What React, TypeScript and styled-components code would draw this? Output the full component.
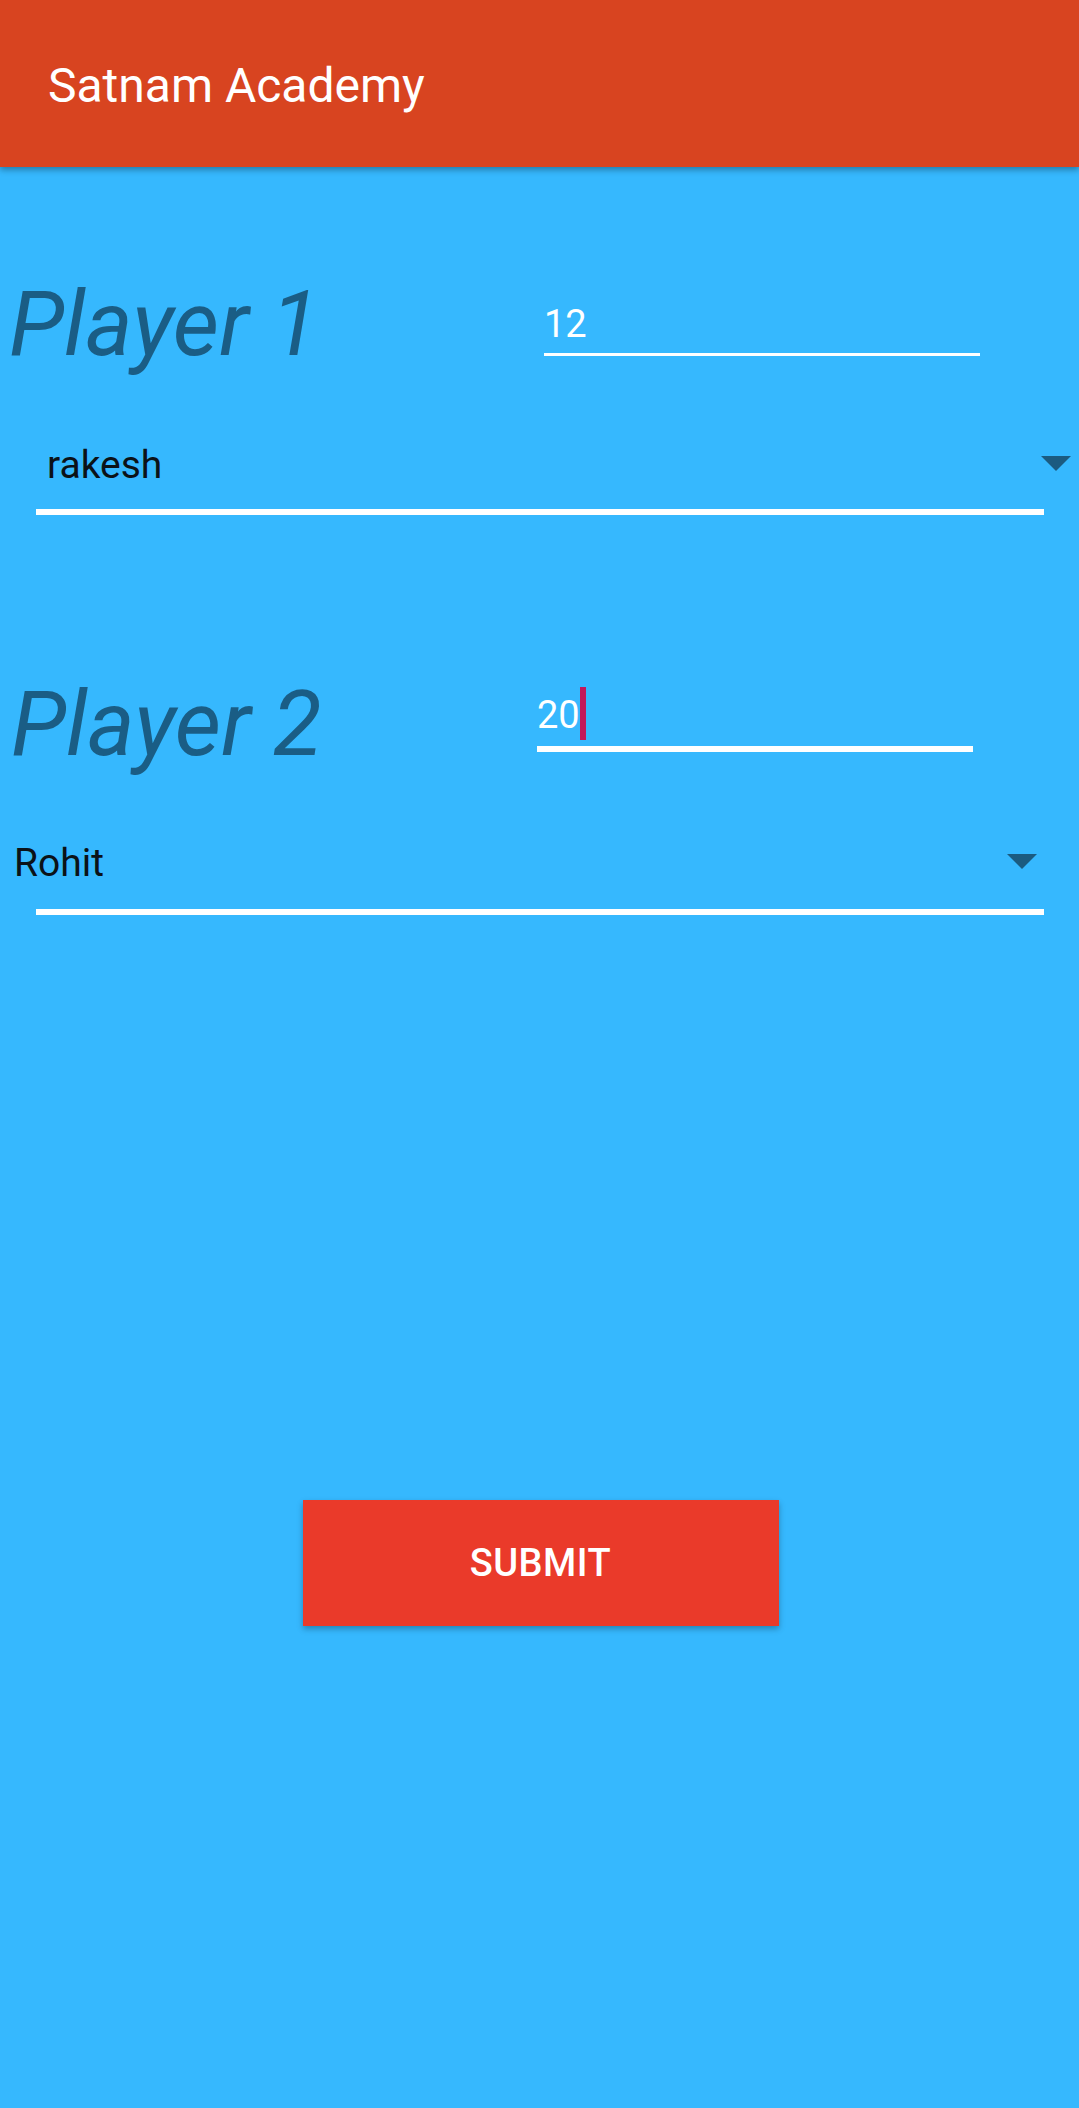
import React from "react";
import styled, { createGlobalStyle } from "styled-components";

const GlobalStyle = createGlobalStyle`
  html, body {
    margin: 0;
    padding: 0;
    background: #36b8fe;
  }
  body {
    font-family: Roboto, "Noto Sans", "Liberation Sans", sans-serif;
  }
  * { box-sizing: border-box; }
`;

const Screen = styled.div`
  min-height: 2108px;
  background: #36b8fe;
  display: flex;
  flex-direction: column;
`;

const AppBar = styled.header`
  height: 167px;
  background: #d84420;
  box-shadow: 0 3px 6px rgba(0, 0, 0, 0.32);
  display: flex;
  align-items: center;
  padding-left: 48px;
  padding-top: 4px;
  position: relative;
  z-index: 1;
`;

const Title = styled.h1`
  margin: 0;
  font-size: 48px;
  font-weight: 400;
  color: #ffffff;
  line-height: 1;
`;

const Body = styled.main`
  display: flex;
  flex-direction: column;
  padding-top: 108px;
`;

const PlayerRow = styled.div<{ $fieldX: number; $gapTop: number }>`
  display: grid;
  grid-template-columns: ${(p) => p.$fieldX}px 436px;
  align-items: start;
  margin-top: ${(p) => p.$gapTop}px;
`;

const PlayerLabel = styled.div<{ $indent: number }>`
  font-size: 90px;
  line-height: 96px;
  padding-top: 2px;
  font-style: italic;
  font-weight: 400;
  color: #1a5d85;
  padding-left: ${(p) => p.$indent}px;
  white-space: nowrap;
`;

const ScoreField = styled.div<{ $focused?: boolean; $offset: number }>`
  margin-top: ${(p) => p.$offset}px;
  display: flex;
  align-items: flex-start;
  height: ${(p) => (p.$focused ? 60 : 55)}px;
  padding-bottom: ${(p) => (p.$focused ? 8 : 6)}px;
  border-bottom: ${(p) => (p.$focused ? 6 : 3)}px solid #ffffff;
  font-size: 38px;
  line-height: 46px;
  color: #ffffff;
`;

const Cursor = styled.span`
  display: inline-block;
  width: 6px;
  height: 53px;
  background: #c2185b;
  margin-top: -5px;
`;

const Dropdown = styled.div<{ $gapTop: number; $padBottom: number }>`
  margin-top: ${(p) => p.$gapTop}px;
  margin-left: 36px;
  width: 1008px;
  display: flex;
  align-items: flex-start;
  justify-content: space-between;
  border-bottom: 6px solid #ffffff;
  padding-bottom: ${(p) => p.$padBottom}px;
`;

const DropdownValue = styled.span<{ $shift: number }>`
  font-size: 39px;
  line-height: 46px;
  color: #0b1218;
  margin-left: ${(p) => p.$shift}px;
`;

const Arrow = styled.svg<{ $right: number }>`
  width: 30px;
  height: 15px;
  margin-top: 14px;
  margin-right: ${(p) => p.$right}px;
  flex: none;
`;

const ButtonWrap = styled.div`
  display: flex;
  justify-content: center;
  margin-top: 585px;
`;

const SubmitButton = styled.button`
  width: 476px;
  height: 126px;
  margin-left: 2px;
  border: none;
  border-radius: 0;
  background: #ea3a2a;
  color: #ffffff;
  font-family: Roboto, "Noto Sans", "Liberation Sans", sans-serif;
  font-size: 38px;
  font-weight: 500;
  letter-spacing: 0.5px;
  box-shadow: 0 3px 6px rgba(0, 0, 0, 0.28);
  cursor: pointer;
  padding: 0;
`;

const DropArrow: React.FC<{ right: number }> = ({ right }) => (
  <Arrow $right={right} viewBox="0 0 30 15">
    <polygon points="0,0 30,0 15,15" fill="#1b5b80" />
  </Arrow>
);

export default function App() {
  return (
    <Screen>
      <GlobalStyle />
      <AppBar>
        <Title>Satnam Academy</Title>
      </AppBar>
      <Body>
        <PlayerRow $fieldX={544} $gapTop={0}>
          <PlayerLabel $indent={9}>Player 1</PlayerLabel>
          <ScoreField $offset={26}>12</ScoreField>
        </PlayerRow>
        <Dropdown $gapTop={69} $padBottom={21}>
          <DropdownValue $shift={11}>rakesh</DropdownValue>
          <DropArrow right={-27} />
        </Dropdown>
        <PlayerRow $fieldX={537} $gapTop={160}>
          <PlayerLabel $indent={11}>Player 2</PlayerLabel>
          <ScoreField $offset={17} $focused>
            20
            <Cursor />
          </ScoreField>
        </PlayerRow>
        <Dropdown $gapTop={67} $padBottom={23}>
          <DropdownValue $shift={-22}>Rohit</DropdownValue>
          <DropArrow right={7} />
        </Dropdown>
        <ButtonWrap>
          <SubmitButton>SUBMIT</SubmitButton>
        </ButtonWrap>
      </Body>
    </Screen>
  );
}
